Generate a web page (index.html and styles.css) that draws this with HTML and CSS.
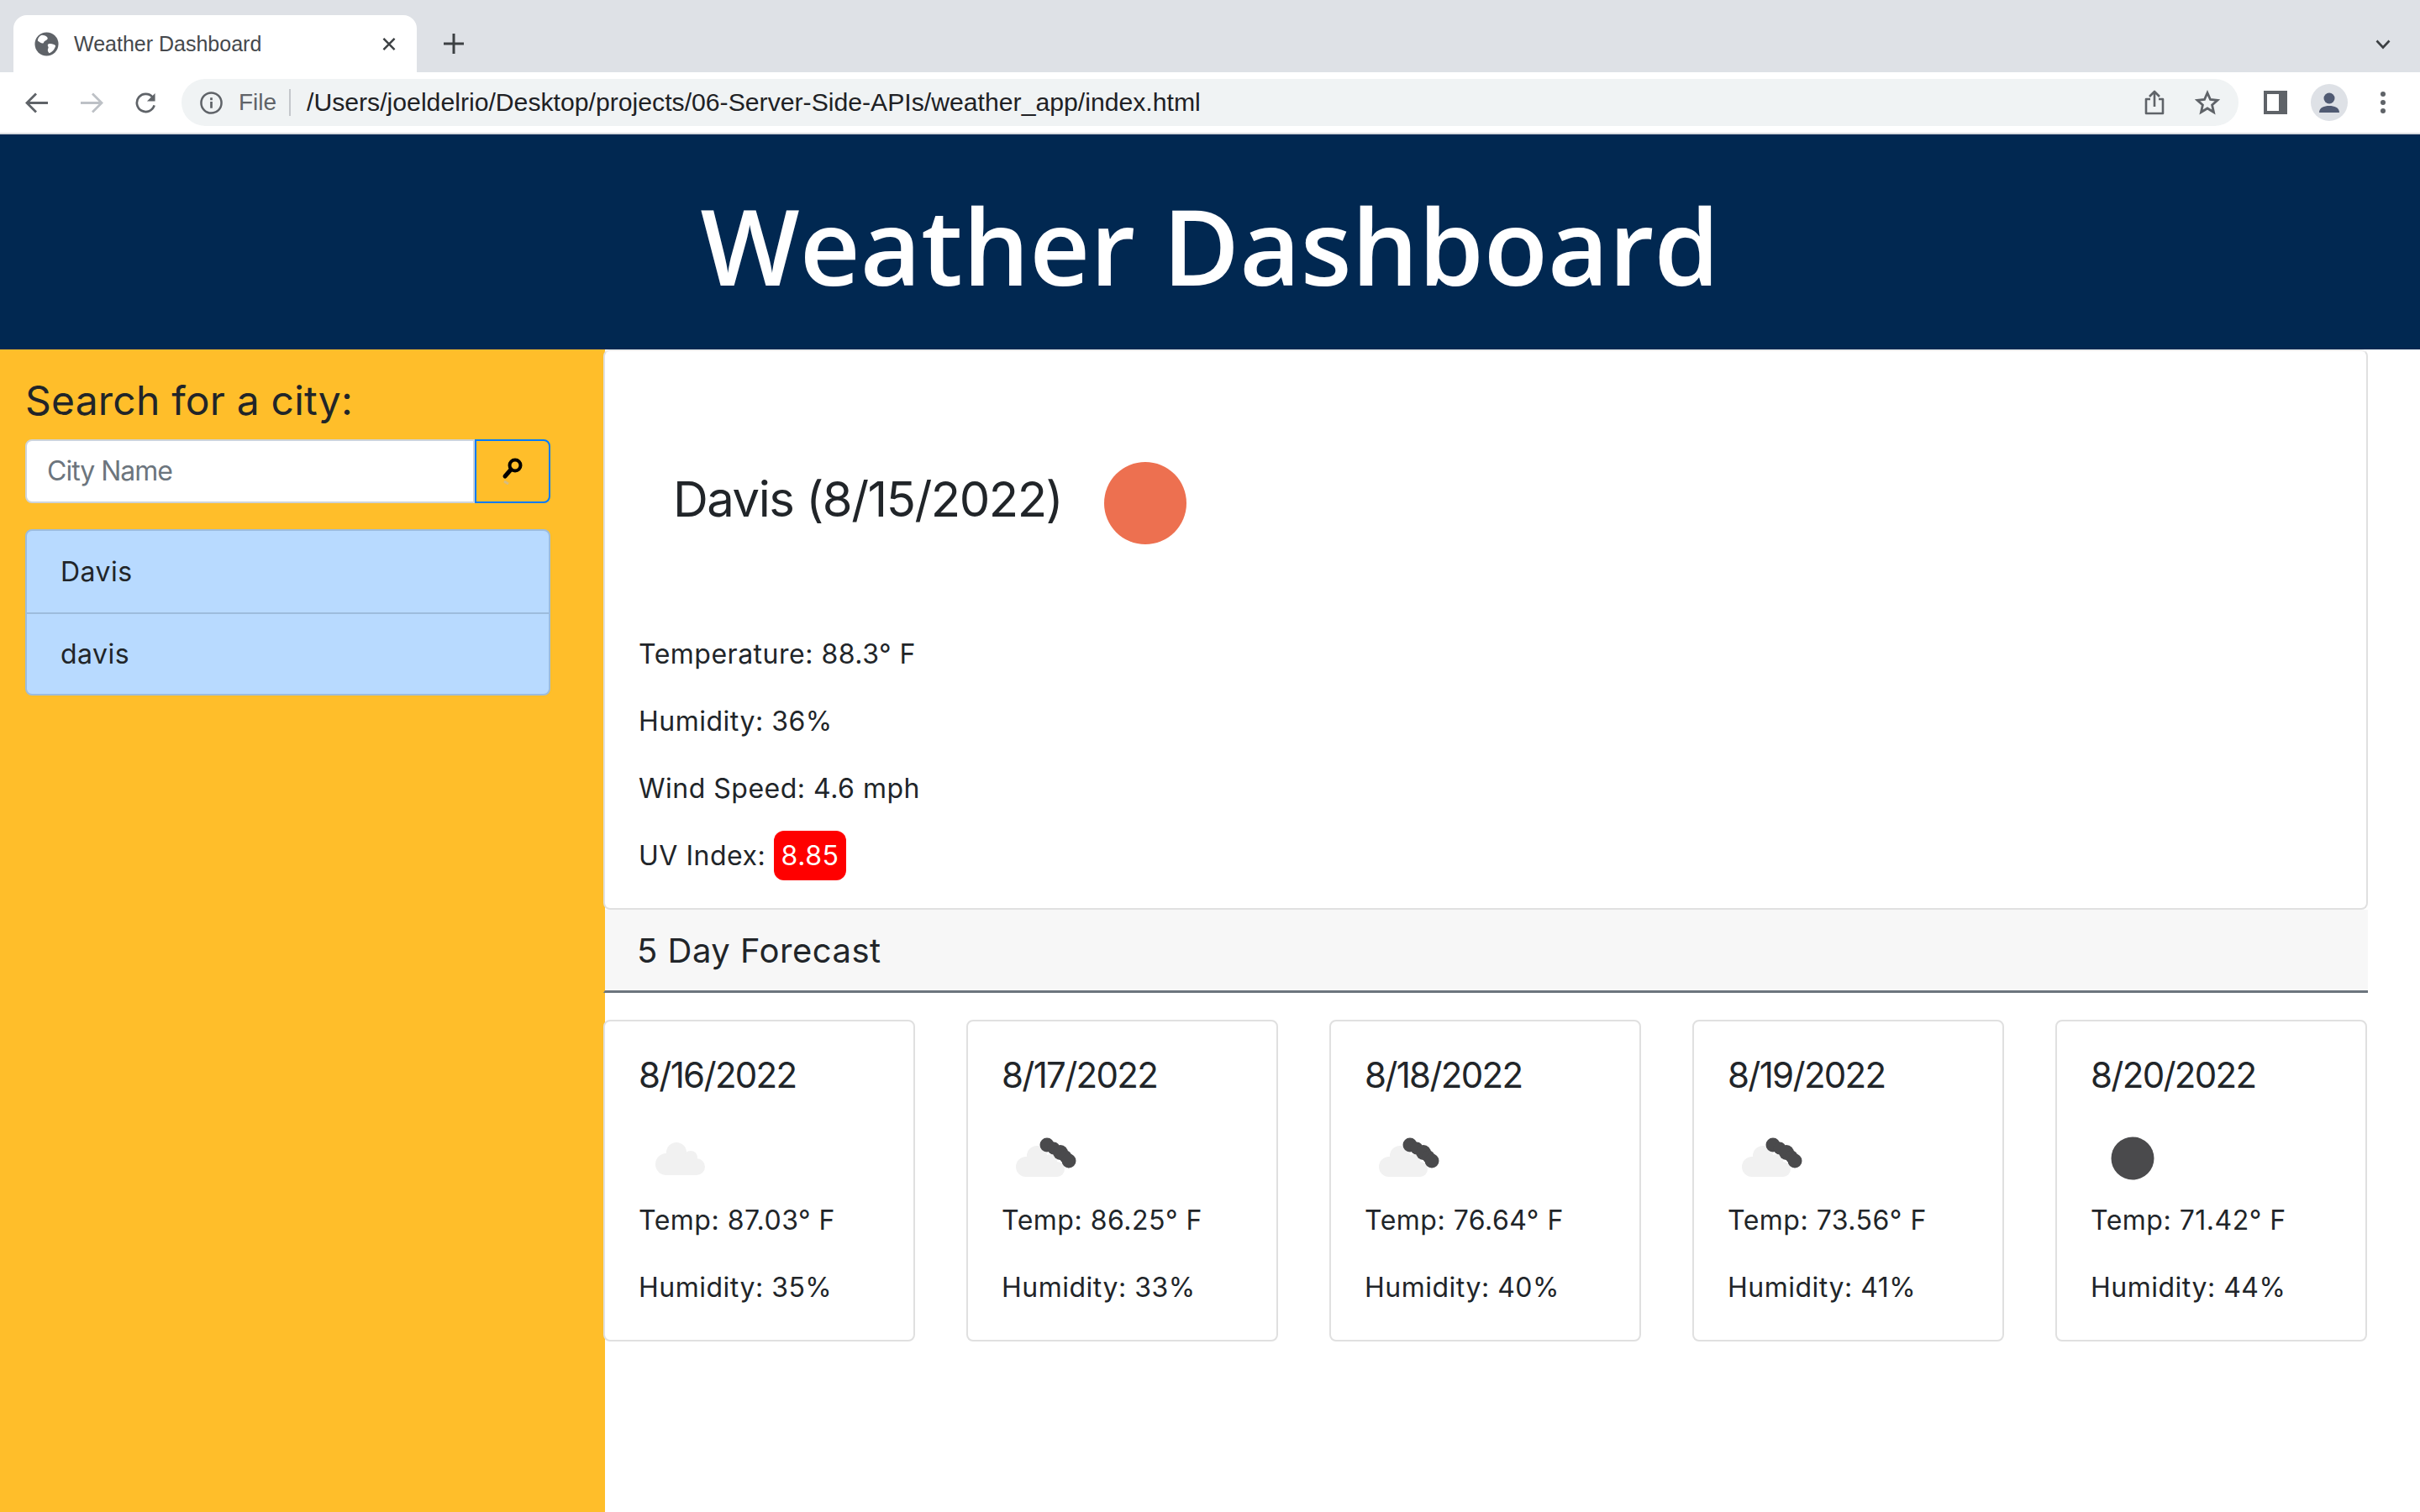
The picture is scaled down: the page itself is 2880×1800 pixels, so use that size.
FILE: index.html
```html
<!DOCTYPE html>
<html lang="en">
<head>
  <meta charset="UTF-8">
  <title>Weather Dashboard</title>
  <link rel="stylesheet" href="styles.css">
</head>
<body>
  <div class="tabstrip">
    <div class="tab">
      <svg class="favicon" viewBox="0 0 30 30"><circle cx="15" cy="15" r="14.5" fill="#5f6368"/><path d="M9 4c3 0 6 1 7 3s-1 3-3 4-1 3-3 3-4-2-6-3c0-3 2-6 5-7zM17 15c3-1 7 0 9 2-1 4-4 8-8 9-2-2-2-4-1-6s-2-3 0-5z" fill="#fff"/></svg>
      <span class="tab-title">Weather Dashboard</span>
      <svg class="tab-close" viewBox="0 0 18 16"><path d="M2 1l14 14M16 1L2 15" stroke="#3c4043" stroke-width="2.6" fill="none"/></svg>
    </div>
    <svg class="new-tab" viewBox="0 0 24 24"><path d="M12 0v24M0 12h24" stroke="#3c4043" stroke-width="3" fill="none"/></svg>
    <svg class="tab-menu" viewBox="0 0 18 12"><path d="M1.500 1.500L9 9.500l7.500-8" stroke="#3c4043" stroke-width="2.600" fill="none"/></svg>
  </div>

  <div class="toolbar">
    <svg class="nav-icon" viewBox="0 0 28 24"><path d="M27 12H3M13 1L2 12l11 11" stroke="#5f6368" stroke-width="2.800" fill="none"/></svg>
    <svg class="nav-icon" viewBox="0 0 28 24"><path d="M1 12h24M15 1l11 11-11 11" stroke="#bdc1c6" stroke-width="2.800" fill="none"/></svg>
    <svg class="nav-icon" viewBox="0 0 28 26"><path d="M24 16a11 11 0 1 1-2-10" stroke="#5f6368" stroke-width="2.800" fill="none"/><path d="M25 1v10H15z" fill="#5f6368"/></svg>
    <div class="omnibox">
      <svg class="info-icon" viewBox="0 0 28 28"><circle cx="14" cy="14" r="12.500" stroke="#5f6368" stroke-width="2.600" fill="none"/><path d="M14 12.500v8M14 7.500v3" stroke="#5f6368" stroke-width="2.800" fill="none"/></svg>
      <span class="scheme">File</span>
      <span class="url">/Users/joeldelrio/Desktop/projects/06-Server-Side-APIs/weather_app/index.html</span>
      <svg class="share-icon" viewBox="0 0 24 30"><path d="M7 11H2v17h20V11h-5M12 20V2M6 8l6-6 6 6" stroke="#5f6368" stroke-width="2.600" fill="none" stroke-linejoin="round"/></svg>
      <svg class="star-icon" viewBox="0 0 30 30"><path d="M15 3.500l3.500 8 8.500.8-6.400 5.700 1.900 8.500L15 22l-7.500 4.500 1.900-8.500L3 12.300l8.500-.8z" stroke="#5f6368" stroke-width="2.800" fill="none"/></svg>
    </div>
    <svg class="panel-icon" viewBox="0 0 28 28"><rect width="28" height="28" fill="#5f6368"/><rect x="4" y="4" width="14" height="20" fill="#fff"/></svg>
    <div class="avatar">
      <svg viewBox="0 0 44 44"><circle cx="22" cy="17" r="6.500" fill="#505a72"/><path d="M10 34c0-6 6-8 12-8s12 2 12 8z" fill="#505a72"/></svg>
    </div>
    <div class="dots"><i></i><i></i><i></i></div>
  </div>

  <header class="page-header">
    <h1>Weather Dashboard</h1>
  </header>

  <div class="layout">
    <aside class="sidebar">
      <h4>Search for a city:</h4>
      <form class="search">
        <input type="text" placeholder="City Name">
        <button type="button">
          <svg viewBox="0 0 28 32"><path d="M5 22l7-8" stroke="#000" stroke-width="5" stroke-linecap="round"/><circle cx="17" cy="9" r="6.500" stroke="#000" stroke-width="4" fill="none"/><path d="M4 28l5 3" stroke="#bbb" stroke-width="3" opacity=".6"/></svg>
        </button>
      </form>
      <ul class="history">
        <li>Davis</li>
        <li>davis</li>
      </ul>
    </aside>

    <main class="content">
      <section class="today">
        <div class="today-head">
          <h2>Davis (8/15/2022)</h2>
          <span class="sun"></span>
        </div>
        <p>Temperature: 88.3° F</p>
        <p>Humidity: 36%</p>
        <p>Wind Speed: 4.6 mph</p>
        <p class="last">UV Index: <span class="uv">8.85</span></p>
      </section>

      <h5 class="forecast-title">5 Day Forecast</h5>

      <div class="forecast">
        <div class="day">
          <h4>8/16/2022</h4>
          <svg class="wx" viewBox="0 0 100 100"><g fill="#f1f1f1"><circle cx="33" cy="57" r="13"/><circle cx="45" cy="43" r="12"/><circle cx="62" cy="49" r="8"/><circle cx="69" cy="60" r="10"/><rect x="33" y="48" width="36" height="22"/></g></svg>
          <p>Temp: 87.03° F</p>
          <p class="last">Humidity: 35%</p>
        </div>
        <div class="day">
          <h4>8/17/2022</h4>
          <svg class="wx" viewBox="0 0 100 100"><use href="#partly"/></svg>
          <p>Temp: 86.25° F</p>
          <p class="last">Humidity: 33%</p>
        </div>
        <div class="day">
          <h4>8/18/2022</h4>
          <svg class="wx" viewBox="0 0 100 100"><use href="#partly"/></svg>
          <p>Temp: 76.64° F</p>
          <p class="last">Humidity: 40%</p>
        </div>
        <div class="day">
          <h4>8/19/2022</h4>
          <svg class="wx" viewBox="0 0 100 100"><use href="#partly"/></svg>
          <p>Temp: 73.56° F</p>
          <p class="last">Humidity: 41%</p>
        </div>
        <div class="day">
          <h4>8/20/2022</h4>
          <svg class="wx" viewBox="0 0 100 100"><circle cx="50" cy="50" r="25.500" fill="#4a4a4c"/></svg>
          <p>Temp: 71.42° F</p>
          <p class="last">Humidity: 44%</p>
        </div>
      </div>
    </main>
  </div>

  <svg class="defs" width="0" height="0">
    <defs>
      <g id="partly">
        <g fill="#f1f1f1"><circle cx="29" cy="60" r="12"/><circle cx="42" cy="47" r="12"/><circle cx="58" cy="53" r="8"/><circle cx="66" cy="63" r="9"/><rect x="29" y="52" width="37" height="20"/></g>
        <g fill="#4a4a4c"><circle cx="54" cy="34" r="8.500"/><circle cx="62" cy="38" r="7.500"/><circle cx="70" cy="43" r="9"/><circle cx="76" cy="48" r="7.500"/><circle cx="80" cy="53" r="8.500"/></g>
      </g>
    </defs>
  </svg>
</body>
</html>
```

FILE: styles.css
```css
* {
  box-sizing: border-box;
}
html, body {
  margin: 0;
  height: 1800px;
  overflow: hidden;
}
body {
  font-family: Inter, sans-serif;
  font-size: 32px;
  line-height: 48px;
  letter-spacing: .5px;
  color: #212529;
  background: #fff;
}

/* browser chrome */
.tabstrip {
  height: 86px;
  padding: 18px 0 0 16px;
  background: #dee1e6;
  display: flex;
  align-items: flex-start;
  letter-spacing: 0;
}
.tab {
  width: 480px;
  height: 68px;
  padding: 0 24px 0 25px;
  background: #fff;
  border-radius: 16px 16px 0 0;
  display: flex;
  align-items: center;
}
.favicon {
  width: 29px;
  height: 29px;
  margin-right: 18px;
}
.tab-title {
  font: 25px "Liberation Sans", sans-serif;
  color: #45484c;
}
.tab-close {
  width: 18px;
  height: 15px;
  margin-left: auto;
}
.new-tab {
  width: 24px;
  height: 24px;
  margin: 22px 0 0 32px;
}
.tab-menu {
  width: 18px;
  height: 12px;
  margin: 29px 35px 0 auto;
}
.toolbar {
  height: 74px;
  padding: 8px 0 8px 30px;
  background: #fff;
  border-bottom: 2px solid #dadce0;
  display: flex;
  align-items: center;
  letter-spacing: 0;
}
.nav-icon {
  width: 28px;
  height: 25px;
  margin-right: 37px;
}
.omnibox {
  width: 2448px;
  height: 56px;
  margin-left: -9px;
  padding: 0 22px;
  background: #f0f3f4;
  border-radius: 28px;
  display: flex;
  align-items: center;
}
.info-icon {
  width: 27px;
  height: 27px;
}
.scheme {
  width: 81px;
  height: 32px;
  padding-left: 19px;
  margin-right: 19px;
  font: 28px/32px "Liberation Sans", sans-serif;
  color: #5f6368;
  border-right: 2px solid #c4c7cb;
}
.url {
  font: 30.2px "Liberation Sans", sans-serif;
  color: #202124;
}
.share-icon {
  width: 24px;
  height: 30px;
  margin-left: auto;
}
.star-icon {
  width: 30px;
  height: 30px;
  margin-left: 36px;
}
.panel-icon {
  width: 28px;
  height: 28px;
  margin-left: 30px;
}
.avatar {
  width: 44px;
  height: 44px;
  margin-left: 28px;
  background: #dee1e6;
  border-radius: 50%;
}
.avatar svg {
  display: block;
}
.dots {
  margin-left: 39px;
  display: flex;
  flex-direction: column;
  gap: 4px;
}
.dots i {
  width: 6px;
  height: 6px;
  background: #5f6368;
  border-radius: 50%;
}

/* page */
.page-header {
  height: 256px;
  padding-top: 8px;
  background: #012851;
  display: flex;
  align-items: center;
  justify-content: center;
}
.page-header h1 {
  margin: 0;
  font-family: "Open Sans", sans-serif;
  font-size: 125px;
  font-weight: 600;
  line-height: 160px;
  letter-spacing: 0;
  color: #fff;
}
.layout {
  display: flex;
  height: 1384px;
}
.sidebar {
  width: 720px;
  flex: none;
  padding: 32px 65px 0 30px;
  background: #ffbe2a;
}
.sidebar h4 {
  margin: 0 0 17px;
  font-size: 48px;
  font-weight: 400;
  line-height: 58px;
  letter-spacing: .2px;
}
.search {
  display: flex;
  height: 76px;
}
.search input {
  flex: 1;
  min-width: 0;
  padding: 0 24px;
  border: 2px solid #ced4da;
  border-radius: 8px 0 0 8px;
  font: inherit;
  letter-spacing: -1px;
  outline: none;
}
.search input::placeholder {
  color: #6c757d;
}
.search button {
  width: 90px;
  padding: 0;
  background: #ffbe2a;
  border: 2px solid #007bff;
  border-radius: 0 8px 8px 0;
  display: flex;
  align-items: center;
  justify-content: center;
}
.search button svg {
  width: 28px;
  height: 32px;
}
.history {
  margin: 31px 0 0;
  padding: 0;
  list-style: none;
  background: #b8daff;
  border: 2px solid #9dbcdc;
  border-radius: 8px;
}
.history li {
  height: 97px;
  padding: 0 40px;
  display: flex;
  align-items: center;
}
.history li + li {
  border-top: 2px solid #9dbcdc;
}
.content {
  width: 2100px;
  margin-left: -2px;
  position: relative;
}
.today {
  height: 667px;
  padding: 132px 40px 0;
  background: #fff;
  border: 2px solid #e0e0e0;
  border-top-color: #eee;
  border-radius: 8px;
}
.today-head {
  display: flex;
  align-items: flex-start;
  margin-bottom: 107px;
}
.today-head h2 {
  margin: 6px 50px 0 41px;
  font-size: 58px;
  font-weight: 400;
  line-height: 77px;
  letter-spacing: -1.500px;
}
.sun {
  width: 98px;
  height: 98px;
  background: #ed7050;
  border-radius: 50%;
}
p {
  margin: 0 0 32px;
}
p.last {
  margin-bottom: 0;
}
.uv {
  display: inline-block;
  height: 59px;
  margin: -6px 0 -5px;
  padding: 0 9px;
  line-height: 59px;
  color: #fff;
  background: #ff0000;
  border-radius: 12px;
}
.forecast-title {
  height: 99px;
  margin: 0 0 32px;
  padding: 2px 38px 0;
  font-size: 40px;
  font-weight: 400;
  line-height: 94px;
  background: #f7f7f7;
  border-left: 2px solid #ffbe2a;
  border-bottom: 3px solid #6c757d;
}
.forecast {
  display: flex;
  gap: 61px;
}
.day {
  width: 371px;
  height: 383px;
  padding: 40px;
  border: 2px solid #e0e0e0;
  border-radius: 8px;
}
.day h4 {
  margin: -5px 0 20px;
  font-size: 42px;
  font-weight: 400;
  line-height: 58px;
  letter-spacing: -1.700px;
}
.wx {
  display: block;
  width: 100px;
  height: 100px;
}
.defs {
  position: absolute;
}
```
